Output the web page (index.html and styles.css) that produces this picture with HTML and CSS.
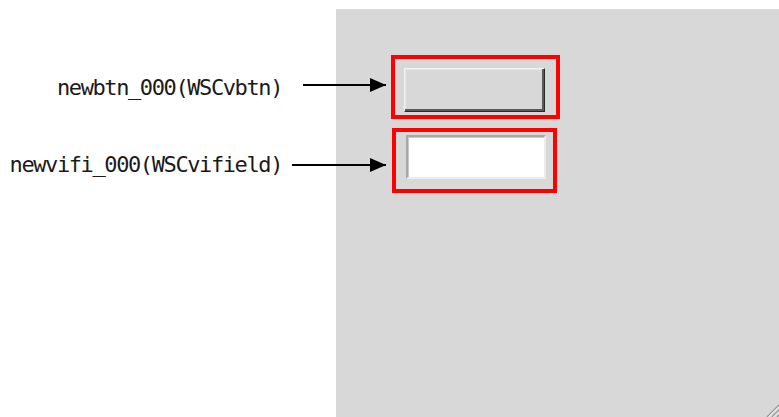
FILE: index.html
```html
<!DOCTYPE html>
<html>
<head>
<meta charset="utf-8">
<title>WSC parts</title>
<link rel="stylesheet" href="styles.css">
</head>
<body>
<div class="panel">
  <div class="target target-btn">
    <div class="callout callout-btn">
      <span class="label">newbtn_000(WSCvbtn)</span>
      <span class="arrow"></span>
    </div>
    <button class="vbtn" type="button"></button>
  </div>
  <div class="target target-field">
    <div class="callout callout-field">
      <span class="label">newvifi_000(WSCvifield)</span>
      <span class="arrow"></span>
    </div>
    <input class="vifield" type="text">
  </div>
  <svg class="grip" width="16" height="16" viewBox="0 0 16 16">
    <path d="M16 4 L4 16 M16 9 L9 16 M16 14 L14 16" stroke="#9a9a9a" stroke-width="1.5"/>
    <path d="M16 5.5 L5.5 16 M16 10.5 L10.5 16" stroke="#f4f4f4" stroke-width="1"/>
  </svg>
</div>
</body>
</html>
```

FILE: styles.css
```css
* {
  box-sizing: border-box;
}
html, body {
  margin: 0;
  padding: 0;
  background: #fff;
  overflow: hidden;
}
body {
  width: 779px;
  height: 417px;
  font-family: "DejaVu Sans Mono", "Liberation Mono", monospace;
}
.panel {
  position: relative;
  margin: 9px 0 0 336px;
  height: 408px;
  background: #d8d8d8;
  padding: 46px 0 0 55px;
  display: flex;
  flex-direction: column;
  align-items: flex-start;
}
.target {
  position: relative;
  border: 4px solid #ff0000;
}
.target-btn {
  padding: 9px 11px 3px 9px;
}
.target-field {
  margin: 9px 0 0 1px;
  padding: 3px 7px 10px 10px;
}
.callout {
  position: absolute;
  right: calc(100% + 9px);
  height: 24px;
  display: flex;
  align-items: center;
  white-space: nowrap;
}
.callout-btn {
  top: 14px;
}
.callout-field {
  top: 21px;
  right: calc(100% + 10px);
}
.label {
  font-size: 22px;
  letter-spacing: -1.4px;
  color: #1a1a1a;
  line-height: 24px;
}
.callout-btn .label {
  position: relative;
  top: 3px;
  margin-right: 21px;
}
.callout-field .label {
  margin-right: 10px;
}
.arrow {
  position: relative;
  display: block;
  height: 2px;
  background: #000;
  width: 83px;
}
.callout-field .arrow {
  width: 94px;
}
.arrow::after {
  content: "";
  position: absolute;
  right: 0;
  top: -6px;
  border-left: 16px solid #000;
  border-top: 7px solid transparent;
  border-bottom: 7px solid transparent;
}
.vbtn {
  display: block;
  width: 141px;
  height: 44px;
  margin: 0;
  padding: 0;
  background: #d8d8d8;
  border: 1px solid;
  border-color: #f2f2f2 #2a2a2a #2a2a2a #f2f2f2;
  box-shadow: inset -2px -2px #5a5a5a, inset 1px 1px #e6e6e6;
  -webkit-appearance: none;
  appearance: none;
}
.vifield {
  display: block;
  width: 140px;
  height: 44px;
  margin: 0;
  padding: 0;
  background: #fff;
  border: 2px solid;
  border-color: #a8a8a8 #ececec #ececec #a8a8a8;
  box-shadow: inset 1px 1px #c8c8c8;
  outline: none;
  -webkit-appearance: none;
  appearance: none;
}
.grip {
  position: absolute;
  right: 0;
  bottom: 0;
}
```
